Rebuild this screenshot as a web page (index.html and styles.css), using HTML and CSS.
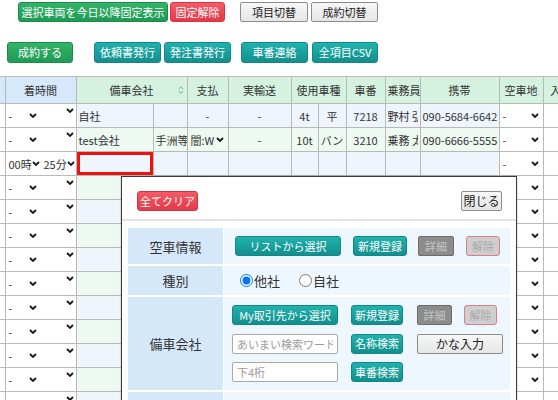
FILE: index.html
```html
<!DOCTYPE html>
<html lang="ja">
<head>
<meta charset="utf-8">
<link rel="stylesheet" href="styles.css">
</head>
<body>
<div class="page">
  <div class="bar bar1">
    <span class="btn green b-fix">選択車両を今日以降固定表示</span>
    <span class="btn red b-unfix">固定解除</span>
    <span class="btn light b-item">項目切替</span>
    <span class="btn light b-deal">成約切替</span>
  </div>
  <div class="bar bar2">
    <span class="btn green b-done">成約する</span>
    <span class="btn teal b-req">依頼書発行</span>
    <span class="btn teal b-order">発注書発行</span>
    <span class="btn teal b-num">車番連絡</span>
    <span class="btn teal b-csv">全項目CSV</span>
  </div>

  <table class="grid">
    <colgroup>
      <col class="c0"><col class="c1"><col class="c2"><col class="c3"><col class="c4"><col class="c5"><col class="c6"><col class="c7"><col class="c8"><col class="c9"><col class="c10"><col class="c11"><col class="c12">
    </colgroup>
    <thead>
      <tr>
        <th class="hb first"></th>
        <th class="hb">着時間</th>
        <th class="hg" colspan="2"><span class="sorthead">備車会社<svg class="sort" viewBox="0 0 6 10" width="6" height="10"><polyline points="1,4 3,1.5 5,4"/><polyline points="1,6 3,8.5 5,6"/></svg></span></th>
        <th class="hg">支払</th>
        <th class="hg">実輸送</th>
        <th class="hg" colspan="2">使用車種</th>
        <th class="hg">車番</th>
        <th class="hg">乗務員</th>
        <th class="hg">携帯</th>
        <th class="hg">空車地</th>
        <th class="hg">入庫地</th>
      </tr>
    </thead>
    <tbody>
      <tr class="ob">
        <td class="first"></td>
        <td class="time"><span class="sel"><span>-</span><svg class="chev" viewBox="0 0 8 5"><polyline points="1,1 4,4 7,1"/></svg></span><span class="sel"><span></span><svg class="chev" viewBox="0 0 8 5"><polyline points="1,1 4,4 7,1"/></svg></span></td>
        <td class="col">自社</td>
        <td class="col"></td>
        <td class="col ctr">-</td>
        <td class="col ctr">-</td>
        <td class="col ctr">4t</td>
        <td class="col ctr">平</td>
        <td class="col ctr">7218</td>
        <td class="col"><span class="clip">野村 弘</span></td>
        <td class="col">090-5684-6642</td>
        <td class="wh"><span class="sel"><span>-</span><svg class="chev" viewBox="0 0 8 5"><polyline points="1,1 4,4 7,1"/></svg></span></td>
        <td class="wh"></td>
      </tr>
      <tr class="eg">
        <td class="first"></td>
        <td class="time"><span class="sel"><span>-</span><svg class="chev" viewBox="0 0 8 5"><polyline points="1,1 4,4 7,1"/></svg></span><span class="sel"><span></span><svg class="chev" viewBox="0 0 8 5"><polyline points="1,1 4,4 7,1"/></svg></span></td>
        <td class="col">test会社</td>
        <td class="col">手洲等</td>
        <td class="col"><span class="sel"><span>闇:W</span><svg class="chev" viewBox="0 0 8 5"><polyline points="1,1 4,4 7,1"/></svg></span></td>
        <td class="col ctr">-</td>
        <td class="col ctr">10t</td>
        <td class="col ctr">バン</td>
        <td class="col ctr">3210</td>
        <td class="col"><span class="clip">乗務 太郎</span></td>
        <td class="col">090-6666-5555</td>
        <td class="wh"><span class="sel"><span>-</span><svg class="chev" viewBox="0 0 8 5"><polyline points="1,1 4,4 7,1"/></svg></span></td>
        <td class="wh"></td>
      </tr>
      <tr class="ob">
        <td class="first"></td>
        <td class="time"><span class="sel"><span>00時</span><svg class="chev" viewBox="0 0 8 5"><polyline points="1,1 4,4 7,1"/></svg></span><span class="sel"><span>25分</span><svg class="chev" viewBox="0 0 8 5"><polyline points="1,1 4,4 7,1"/></svg></span></td>
        <td class="col active"></td>
        <td class="col"></td><td class="col"></td><td class="col"></td><td class="col"></td><td class="col"></td><td class="col"></td><td class="col"></td><td class="col"></td>
        <td class="wh"><span class="sel"><span>-</span><svg class="chev" viewBox="0 0 8 5"><polyline points="1,1 4,4 7,1"/></svg></span></td>
        <td class="wh"></td>
      </tr>
      <tr class="eg"><td class="first"></td><td class="time"><span class="sel"><span>-</span><svg class="chev" viewBox="0 0 8 5"><polyline points="1,1 4,4 7,1"/></svg></span><span class="sel"><span></span><svg class="chev" viewBox="0 0 8 5"><polyline points="1,1 4,4 7,1"/></svg></span></td><td class="col"></td><td class="col"></td><td class="col"></td><td class="col"></td><td class="col"></td><td class="col"></td><td class="col"></td><td class="col"></td><td class="col"></td><td class="wh"><span class="sel"><span>-</span><svg class="chev" viewBox="0 0 8 5"><polyline points="1,1 4,4 7,1"/></svg></span></td><td class="wh"></td></tr>
      <tr class="ob"><td class="first"></td><td class="time"><span class="sel"><span>-</span><svg class="chev" viewBox="0 0 8 5"><polyline points="1,1 4,4 7,1"/></svg></span><span class="sel"><span></span><svg class="chev" viewBox="0 0 8 5"><polyline points="1,1 4,4 7,1"/></svg></span></td><td class="col"></td><td class="col"></td><td class="col"></td><td class="col"></td><td class="col"></td><td class="col"></td><td class="col"></td><td class="col"></td><td class="col"></td><td class="wh"><span class="sel"><span>-</span><svg class="chev" viewBox="0 0 8 5"><polyline points="1,1 4,4 7,1"/></svg></span></td><td class="wh"></td></tr>
      <tr class="eg"><td class="first"></td><td class="time"><span class="sel"><span>-</span><svg class="chev" viewBox="0 0 8 5"><polyline points="1,1 4,4 7,1"/></svg></span><span class="sel"><span></span><svg class="chev" viewBox="0 0 8 5"><polyline points="1,1 4,4 7,1"/></svg></span></td><td class="col"></td><td class="col"></td><td class="col"></td><td class="col"></td><td class="col"></td><td class="col"></td><td class="col"></td><td class="col"></td><td class="col"></td><td class="wh"><span class="sel"><span>-</span><svg class="chev" viewBox="0 0 8 5"><polyline points="1,1 4,4 7,1"/></svg></span></td><td class="wh"></td></tr>
      <tr class="ob"><td class="first"></td><td class="time"><span class="sel"><span>-</span><svg class="chev" viewBox="0 0 8 5"><polyline points="1,1 4,4 7,1"/></svg></span><span class="sel"><span></span><svg class="chev" viewBox="0 0 8 5"><polyline points="1,1 4,4 7,1"/></svg></span></td><td class="col"></td><td class="col"></td><td class="col"></td><td class="col"></td><td class="col"></td><td class="col"></td><td class="col"></td><td class="col"></td><td class="col"></td><td class="wh"><span class="sel"><span>-</span><svg class="chev" viewBox="0 0 8 5"><polyline points="1,1 4,4 7,1"/></svg></span></td><td class="wh"></td></tr>
      <tr class="eg"><td class="first"></td><td class="time"><span class="sel"><span>-</span><svg class="chev" viewBox="0 0 8 5"><polyline points="1,1 4,4 7,1"/></svg></span><span class="sel"><span></span><svg class="chev" viewBox="0 0 8 5"><polyline points="1,1 4,4 7,1"/></svg></span></td><td class="col"></td><td class="col"></td><td class="col"></td><td class="col"></td><td class="col"></td><td class="col"></td><td class="col"></td><td class="col"></td><td class="col"></td><td class="wh"><span class="sel"><span>-</span><svg class="chev" viewBox="0 0 8 5"><polyline points="1,1 4,4 7,1"/></svg></span></td><td class="wh"></td></tr>
      <tr class="ob"><td class="first"></td><td class="time"><span class="sel"><span>-</span><svg class="chev" viewBox="0 0 8 5"><polyline points="1,1 4,4 7,1"/></svg></span><span class="sel"><span></span><svg class="chev" viewBox="0 0 8 5"><polyline points="1,1 4,4 7,1"/></svg></span></td><td class="col"></td><td class="col"></td><td class="col"></td><td class="col"></td><td class="col"></td><td class="col"></td><td class="col"></td><td class="col"></td><td class="col"></td><td class="wh"><span class="sel"><span>-</span><svg class="chev" viewBox="0 0 8 5"><polyline points="1,1 4,4 7,1"/></svg></span></td><td class="wh"></td></tr>
      <tr class="eg"><td class="first"></td><td class="time"><span class="sel"><span>-</span><svg class="chev" viewBox="0 0 8 5"><polyline points="1,1 4,4 7,1"/></svg></span><span class="sel"><span></span><svg class="chev" viewBox="0 0 8 5"><polyline points="1,1 4,4 7,1"/></svg></span></td><td class="col"></td><td class="col"></td><td class="col"></td><td class="col"></td><td class="col"></td><td class="col"></td><td class="col"></td><td class="col"></td><td class="col"></td><td class="wh"><span class="sel"><span>-</span><svg class="chev" viewBox="0 0 8 5"><polyline points="1,1 4,4 7,1"/></svg></span></td><td class="wh"></td></tr>
      <tr class="ob"><td class="first"></td><td class="time"><span class="sel"><span>-</span><svg class="chev" viewBox="0 0 8 5"><polyline points="1,1 4,4 7,1"/></svg></span><span class="sel"><span></span><svg class="chev" viewBox="0 0 8 5"><polyline points="1,1 4,4 7,1"/></svg></span></td><td class="col"></td><td class="col"></td><td class="col"></td><td class="col"></td><td class="col"></td><td class="col"></td><td class="col"></td><td class="col"></td><td class="col"></td><td class="wh"><span class="sel"><span>-</span><svg class="chev" viewBox="0 0 8 5"><polyline points="1,1 4,4 7,1"/></svg></span></td><td class="wh"></td></tr>
      <tr class="eg"><td class="first"></td><td class="time"><span class="sel"><span>-</span><svg class="chev" viewBox="0 0 8 5"><polyline points="1,1 4,4 7,1"/></svg></span><span class="sel"><span></span><svg class="chev" viewBox="0 0 8 5"><polyline points="1,1 4,4 7,1"/></svg></span></td><td class="col"></td><td class="col"></td><td class="col"></td><td class="col"></td><td class="col"></td><td class="col"></td><td class="col"></td><td class="col"></td><td class="col"></td><td class="wh"><span class="sel"><span>-</span><svg class="chev" viewBox="0 0 8 5"><polyline points="1,1 4,4 7,1"/></svg></span></td><td class="wh"></td></tr>
      <tr class="ob"><td class="first"></td><td class="time"><span class="sel"><span>-</span><svg class="chev" viewBox="0 0 8 5"><polyline points="1,1 4,4 7,1"/></svg></span><span class="sel"><span></span><svg class="chev" viewBox="0 0 8 5"><polyline points="1,1 4,4 7,1"/></svg></span></td><td class="col"></td><td class="col"></td><td class="col"></td><td class="col"></td><td class="col"></td><td class="col"></td><td class="col"></td><td class="col"></td><td class="col"></td><td class="wh"><span class="sel"><span>-</span><svg class="chev" viewBox="0 0 8 5"><polyline points="1,1 4,4 7,1"/></svg></span></td><td class="wh"></td></tr>
    </tbody>
  </table>

  <div class="modal">
    <div class="mhead">
      <span class="btn red b-clear">全てクリア</span>
      <span class="btn light b-close">閉じる</span>
    </div>
    <div class="form">
      <div class="lab">空車情報</div>
      <div class="val v-empty">
        <span class="btn teal b-list">リストから選択</span>
        <span class="btn teal b-new">新規登録</span>
        <span class="btn dis b-detail">詳細</span>
        <span class="btn dis-red b-release">解除</span>
      </div>
      <div class="lab">種別</div>
      <div class="val v-kind">
        <label class="radio"><input type="radio" name="kind" checked>他社</label>
        <label class="radio"><input type="radio" name="kind">自社</label>
      </div>
      <div class="lab">備車会社</div>
      <div class="val v-company">
        <div class="line">
          <span class="btn teal b-my">My取引先から選択</span>
          <span class="btn teal b-new2">新規登録</span>
          <span class="btn dis b-detail2">詳細</span>
          <span class="btn dis-red b-release2">解除</span>
        </div>
        <div class="line">
          <input class="txt" type="text" placeholder="あいまい検索ワード">
          <span class="btn teal b-search">名称検索</span>
          <span class="btn light b-kana">かな入力</span>
        </div>
        <div class="line">
          <input class="txt" type="text" placeholder="下4桁">
          <span class="btn teal b-search">車番検索</span>
        </div>
      </div>
      <div class="lab"></div>
      <div class="val"></div>
    </div>
  </div>
</div>
</body>
</html>
```

FILE: styles.css
```css
html, body {
  margin: 0;
  padding: 0;
  background: #fff;
}
body {
  font-family: "Noto Sans CJK JP", "Noto Sans", sans-serif;
  color: #333;
  width: 558px;
  height: 400px;
  overflow: hidden;
}
.page {
  position: relative;
  width: 558px;
  height: 400px;
  overflow: hidden;
}

/* buttons */
.btn {
  display: inline-flex;
  align-items: center;
  justify-content: center;
  box-sizing: border-box;
  height: 20px;
  border-radius: 3px;
  font-size: 11px;
  line-height: 1;
  color: #fff;
  white-space: nowrap;
  border: 1px solid transparent;
}
.green {
  background: linear-gradient(#34b468, #1f9a53);
  border-color: #1c8c4b;
}
.red {
  background: linear-gradient(#f45b67, #e23a49);
  border-color: #d63442;
}
.teal {
  background: linear-gradient(#21b2ae, #138f8d);
  border-color: #12878a;
}
.light {
  background: linear-gradient(#f7f7f7, #e6e6e6);
  border-color: #8d8d8d;
  color: #222;
  border-radius: 2px;
}
.dis {
  background: #8c8c8c;
  border-color: #6b6b6b;
  color: #c4c4c4;
  border-radius: 2px;
}
.dis-red {
  background: #cfcfcf;
  border-color: #e07c86;
  color: #a9a9a9;
}

.bar {
  display: flex;
  align-items: center;
}
.bar1 {
  padding: 2px 0 0 18px;
}
.b-fix { width: 150px; }
.b-unfix { width: 55px; margin-left: 2px; }
.b-item { width: 68px; margin-left: 15px; }
.b-deal { width: 67px; margin-left: 3px; }

.bar2 {
  margin-top: 20px;
  padding-left: 7px;
}
.bar2 .btn { height: 21px; }
.b-done { width: 66px; }
.b-req { width: 67px; margin-left: 21px; }
.b-order { width: 67px; margin-left: 3px; }
.b-num { width: 67px; margin-left: 10px; }
.b-csv { width: 66px; margin-left: 4px; }

/* table */
.grid {
  margin-top: 13px;
  border-collapse: collapse;
  table-layout: fixed;
  width: 590px;
  font-size: 11px;
}
.c0 { width: 5px; }
.c1 { width: 71px; }
.c2 { width: 77px; }
.c3 { width: 34px; }
.c4 { width: 41px; }
.c5 { width: 63px; }
.c6 { width: 27px; }
.c7 { width: 28px; }
.c8 { width: 39px; }
.c9 { width: 35px; }
.c10 { width: 79px; }
.c11 { width: 44px; }
.c12 { width: 47px; }

.grid th, .grid td {
  border: 1px solid #b9b9b9;
  padding: 0 2px;
  white-space: nowrap;
  overflow: hidden;
  color: #333;
}
.grid th {
  height: 26px;
  font-weight: normal;
  font-size: 11px;
  text-align: center;
}
.grid td {
  height: 23px;
  text-align: left;
}
.grid .first {
  border-left: none;
  padding: 0;
}
.clip {
  display: block;
  overflow: hidden;
  white-space: nowrap;
}
.hb { background: #d6e9fb; }
.hg { background: #d5f2e0; }
.sorthead {
  display: flex;
  align-items: center;
  justify-content: center;
  position: relative;
}
.sort {
  position: absolute;
  right: 1px;
  top: 50%;
  margin-top: -5px;
  fill: none;
  stroke: #6bb7b7;
  stroke-width: 1;
}
.ctr { text-align: center !important; }
.ob .col { background: #eef5fd; }
.eg .col { background: #eef9f1; }
.time, .wh { background: #fff; }
.grid td.time {
  padding: 0;
}
.time .sel {
  width: 50%;
  box-sizing: border-box;
  float: left;
  padding-left: 3px;
}
.sel {
  display: flex;
  align-items: center;
  justify-content: space-between;
  padding: 0 2px 0 1px;
}
.chev {
  width: 8px;
  height: 5px;
  fill: none;
  stroke: #1a1a1a;
  stroke-width: 1.8;
  flex: none;
}
.time .sel:first-child .chev { margin-right: 2px; }
.active {
  box-shadow: inset 0 0 0 3px #ee1111;
}

/* modal */
.modal {
  position: absolute;
  left: 121px;
  top: 176px;
  width: 396px;
  height: 250px;
  box-sizing: border-box;
  background: #fff;
  border: 1px solid #3a3a3a;
  box-shadow: 0 0 2px rgba(0,0,0,0.25);
  z-index: 5;
}
.mhead {
  display: flex;
  justify-content: space-between;
  align-items: center;
  padding: 14px 14px 8px 15px;
  border-bottom: 2px solid #e3e3e3;
}
.b-clear { width: 61px; }
.b-close { width: 41px; font-size: 12px; }
.form {
  display: grid;
  grid-template-columns: 95px 286px;
  grid-template-rows: 36px 29px 93px 40px;
  gap: 2px 1px;
  padding: 7px 6px 0 6px;
}
.lab {
  background: #d5e8fa;
  display: flex;
  align-items: center;
  justify-content: center;
  font-size: 13px;
  color: #333;
}
.val {
  background: #eef6fe;
  display: flex;
  align-items: center;
}
.v-empty { padding-left: 11px; }
.b-list { width: 106px; }
.b-new { width: 54px; margin-left: 12px; }
.b-detail { width: 36px; margin-left: 11px; }
.b-release { width: 34px; margin-left: 12px; }

.v-kind {
  padding-left: 16px;
  font-size: 13px;
}
.radio {
  display: inline-flex;
  align-items: center;
  margin-right: 19px;
}
.radio input {
  margin: 0 1px 0 0;
  width: 13px;
  height: 13px;
}

.v-company {
  flex-direction: column;
  align-items: flex-start;
  justify-content: flex-start;
  padding: 8px 0 0 8px;
  box-sizing: border-box;
}
.line {
  display: flex;
  align-items: center;
  height: 20px;
  margin-bottom: 8.5px;
}
.b-my { width: 106px; }
.b-new2 { width: 52px; margin-left: 13px; }
.b-detail2 { width: 35px; margin-left: 14px; }
.b-release2 { width: 33px; margin-left: 12px; }
.txt {
  width: 106px;
  height: 20px;
  box-sizing: border-box;
  border: 1px solid #a9a9a9;
  border-radius: 2px;
  padding: 0 4px;
  font-family: "Noto Sans CJK JP", sans-serif;
  font-size: 11px;
  background: #fff;
  outline: none;
}
.txt::placeholder { color: #9a9a9a; }
.b-search { width: 52px; margin-left: 13px; }
.b-kana { width: 86px; margin-left: 14px; font-size: 12px; }
```
